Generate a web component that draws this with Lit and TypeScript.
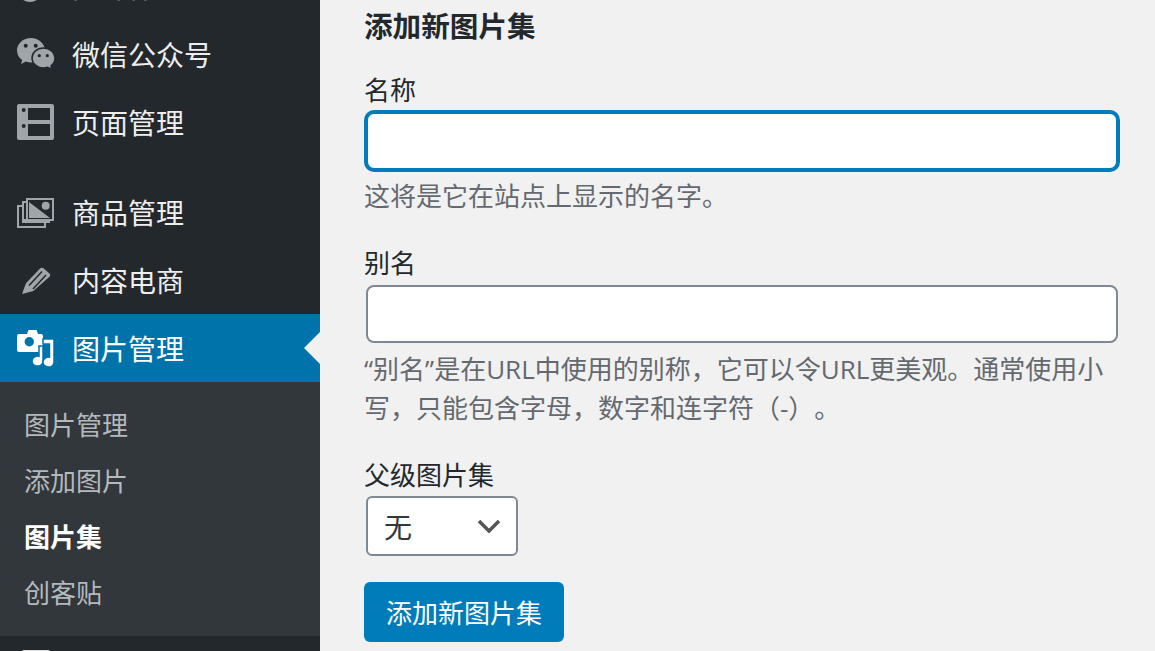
import { LitElement, css, html, svg } from "lit";
import { customElement } from "lit/decorators.js";

// all icons are drawn in a 38x38 box
const icons = {
  media: svg`<circle cx="13" cy="21.500" r="12.500"/>`,
  wechat: svg`
    <path d="M14 2C6.300 2 0 7.500 0 14.500c0 4 2 7.300 5.200 9.500L4 28l5-2.500c1.700.5 3.300 1 5 1C21.700 26.500 28 21 28 14.500S21.700 2 14 2Z"/>
    <path d="M38 22c0-5.500-5.200-10-11.500-10S15 16.500 15 22s5.200 10 11.500 10c1.400 0 2.700-.2 4-.7L35 33.500l-1-3.700C36.500 28 38 25.200 38 22Z" stroke="#23282d" stroke-width="1.500"/>
    <g fill="#23282d"><circle cx="8.700" cy="9.700" r="2"/><circle cx="18.700" cy="9.700" r="2"/><circle cx="22.300" cy="19.700" r="1.600"/><circle cx="30.300" cy="19.700" r="1.600"/></g>`,
  page: svg`
    <path fill-rule="evenodd" d="M2 0h33a2 2 0 0 1 2 2v32a2 2 0 0 1-2 2H2a2 2 0 0 1-2-2V2a2 2 0 0 1 2-2ZM11 4v12h22V4H11Zm0 16v12h22V20H11Z"/>
    <g fill="#23282d"><circle cx="6.700" cy="6" r="2"/><circle cx="6.700" cy="22" r="2"/></g>`,
  gallery: svg`
    <path fill-rule="evenodd" d="M9 4h28v23h-4v2h-4v5H0V11h5V7h4V4Zm2 2v19h24V6H11ZM7 9v2h0v14h2v2h22v0H9V9H7Zm-5 4v19h25v-3H5V13H2Z"/>
    <path d="M12 8 33 24H12Z"/><circle cx="28.700" cy="11.700" r="4"/>`,
  pencil: svg`
    <path d="M5 32 9 21.300 23 6.500c1-1 2.500-1.200 3.500-.2l6 5.300c1 1 .9 2.200 0 3.200L16.300 29Z"/>
    <path d="M12 23.500 25 9.500M16 27 29 13" fill="none" stroke="#23282d" stroke-width="1.500"/>`,
  photo: svg`
    <path fill-rule="evenodd" d="M10 5 11.500 1h8L21 5h3a2 2 0 0 1 2 2v14a2 2 0 0 1-2 2H2a2 2 0 0 1-2-2V7a2 2 0 0 1 2-2h8Zm2.300 3a4.700 4.700 0 1 0 0 9.400 4.700 4.700 0 0 0 0-9.400Z"/>
    <path d="M22 17h4v15a5.500 5 0 1 1-4-4.700V17Z" stroke="#0073aa" stroke-width="1.500"/>
    <path d="M26 10h11v23a5.500 5 0 1 1-4.500-4.800V15H26V10Z" stroke="#0073aa" stroke-width="1.500"/>`,
};

const menu = [
  { label: "多媒体", icon: "media" },
  { label: "微信公众号", icon: "wechat" },
  { label: "页面管理", icon: "page", gapAfter: true },
  { label: "商品管理", icon: "gallery" },
  { label: "内容电商", icon: "pencil" },
];

const subItems = [
  { label: "图片管理" },
  { label: "添加图片" },
  { label: "图片集", current: true },
  { label: "创客贴" },
];

@customElement("app-root")
export class AppRoot extends LitElement {
  static styles = css`
    :host {
      display: block;
      width: 1155px;
      height: 651px;
      overflow: hidden;
      background: #f1f1f1;
      font-family: "Open Sans", "Noto Sans CJK SC", sans-serif;
      text-spacing-trim: space-all;
    }

    .page {
      display: flex;
      height: 651px;
      overflow: hidden;
    }

    .sidebar {
      flex: 0 0 320px;
      background: #23282d;
      overflow: hidden;
    }

    .menu {
      margin-top: -47px;
    }

    .item {
      display: flex;
      align-items: center;
      height: 68px;
      color: #eee;
      font-size: 28px;
      line-height: 68px;
      position: relative;
    }

    .item.gap {
      margin-bottom: 22px;
    }

    .item.active {
      margin-top: -1px;
      background: #0073aa;
      color: #fff;
    }

    .item.active span {
      margin-top: 2px;
    }

    .item.active::after {
      content: "";
      position: absolute;
      right: 0;
      top: 50%;
      margin-top: -16px;
      border: 16px solid transparent;
      border-right-color: #f1f1f1;
    }

    .icon {
      flex: 0 0 38px;
      width: 38px;
      height: 38px;
      margin: 0 17px;
      fill: #a0a5aa;
    }

    .active .icon {
      fill: #fff;
    }

    .submenu {
      background: #32373c;
      padding: 15px 0;
    }

    .subitem {
      height: 56px;
      padding-left: 24px;
      font-size: 26px;
      line-height: 56px;
      color: #b4b9be;
    }

    .subitem.current {
      color: #fff;
      font-weight: 700;
    }

    .last-icon {
      width: 28px;
      height: 4px;
      margin: 14px 0 0 22px;
      background: #ddd;
      border-radius: 2px 2px 0 0;
    }

    .content {
      flex: 1;
      padding: 0 35px 0 44px;
      color: #23282d;
    }

    h2 {
      margin: 7px 0 0;
      font-size: 28.6px;
      line-height: 38px;
      font-weight: 700;
      color: #23282d;
    }

    .field {
      display: flex;
      flex-direction: column;
      align-items: flex-start;
    }

    label {
      font-size: 26px;
      line-height: 36px;
    }

    .name-field {
      margin-top: 27px;
    }

    .slug-field {
      margin-top: 29px;
    }

    .parent-field {
      margin-top: 29px;
    }

    .control {
      box-sizing: border-box;
      width: 752px;
      height: 58px;
      margin: 4px 0 0 2px;
      background: #fff;
      border: 2px solid #7e8993;
      border-radius: 8px;
    }

    .control.focus {
      border-color: #007cba;
      box-shadow: 0 0 0 2px #007cba;
    }

    .hint {
      margin: 7px 0 0;
      font-size: 26px;
      line-height: 39px;
      color: #646970;
    }

    .select {
      box-sizing: border-box;
      display: flex;
      align-items: center;
      justify-content: space-between;
      width: 152px;
      height: 60px;
      margin: 3px 0 0 2px;
      padding: 0 15px 0 16px;
      background: #fff;
      border: 2px solid #7e8993;
      border-radius: 6px;
      font-size: 28px;
      color: #32373c;
    }

    .select svg {
      width: 24px;
      height: 14px;
      fill: none;
      stroke: #555;
      stroke-width: 3.5;
    }

    .button {
      display: block;
      box-sizing: border-box;
      width: 200px;
      height: 60px;
      margin-top: 26px;
      padding: 0;
      border: 0;
      border-radius: 6px;
      background: #007cba;
      color: #fff;
      font: inherit;
      font-size: 26px;
    }
  `;

  private icon(name: keyof typeof icons) {
    return html`<svg class="icon" viewBox="0 0 38 38">${icons[name]}</svg>`;
  }

  render() {
    return html`
      <div class="page">
        <nav class="sidebar">
          <div class="menu">
            ${menu.map(
              (m) => html`
                <div class="item ${m.gapAfter ? "gap" : ""}">
                  ${this.icon(m.icon as keyof typeof icons)}<span>${m.label}</span>
                </div>
              `
            )}
            <div class="item active">${this.icon("photo")}<span>图片管理</span></div>
            <div class="submenu">
              ${subItems.map(
                (s) => html`<div class="subitem ${s.current ? "current" : ""}">${s.label}</div>`
              )}
            </div>
            <div class="last-icon"></div>
          </div>
        </nav>
        <main class="content">
          <h2>添加新图片集</h2>
          <div class="field name-field">
            <label>名称</label>
            <div class="control focus"></div>
            <p class="hint">这将是它在站点上显示的名字。</p>
          </div>
          <div class="field slug-field">
            <label>别名</label>
            <div class="control"></div>
            <p class="hint">“别名”是在URL中使用的别称，它可以令URL更美观。通常使用小写，只能包含字母，数字和连字符（-）。</p>
          </div>
          <div class="field parent-field">
            <label>父级图片集</label>
            <div class="select">
              <span>无</span>
              <svg viewBox="0 0 24 14"><path d="M2 2l10 10L22 2"/></svg>
            </div>
          </div>
          <button class="button">添加新图片集</button>
        </main>
      </div>
    `;
  }
}
